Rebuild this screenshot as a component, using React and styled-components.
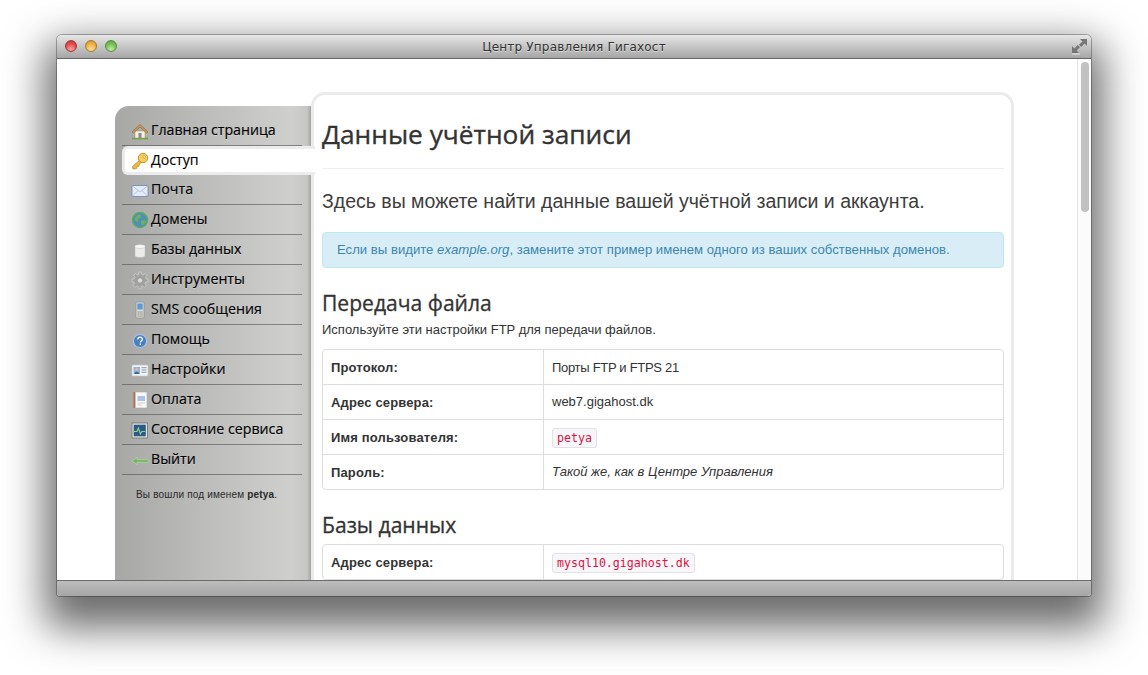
import React from "react";
import styled, { createGlobalStyle } from "styled-components";

const Global = createGlobalStyle`
  html, body {
    margin: 0;
    height: 675px;
    overflow: hidden;
    background: #fff;
  }
  * { box-sizing: border-box; }
`;

const Page = styled.div`
  padding: 35px 57px 0;
`;

const Window = styled.div`
  width: 1034px;
  height: 561px;
  display: flex;
  flex-direction: column;
  border-radius: 5px 5px 3px 3px;
  background: #fff;
  box-shadow: 0 0 0 1px rgba(0, 0, 0, 0.28), 0 20px 40px 12px rgba(0, 0, 0, 0.58);
  overflow: hidden;
`;

const TitleBar = styled.div`
  position: relative;
  flex: none;
  height: 24px;
  display: flex;
  align-items: center;
  justify-content: center;
  background: linear-gradient(#e6e6e6, #c6c6c6 50%, #a6a6a6);
  border-bottom: 1px solid #666;
`;

const Lights = styled.div`
  position: absolute;
  left: 8px;
  top: 5px;
  display: flex;
  gap: 8px;
`;

const Light = styled.span`
  width: 12px;
  height: 12px;
  border-radius: 50%;
  border: 1px solid ${(p) => p.$edge};
  background: radial-gradient(circle at 50% 85%, ${(p) => p.$glow} 0, ${(p) => p.$color} 60%, ${(p) => p.$top} 100%);
`;

const WindowTitle = styled.div`
  font: 12px "DejaVu Sans", sans-serif;
  letter-spacing: 0.2px;
  color: #333;
  text-shadow: 0 1px 0 rgba(255, 255, 255, 0.5);
`;

const ResizeIcon = styled.svg`
  position: absolute;
  right: 3px;
  top: 3px;
`;

const Body = styled.div`
  flex: 1;
  min-height: 0;
  display: flex;
`;

const Viewport = styled.div`
  flex: 1;
  min-width: 0;
  padding: 33px 0 0 58px;
  overflow: hidden;
`;

const Layout = styled.div`
  display: flex;
  align-items: flex-start;
`;

const Sidebar = styled.nav`
  position: relative;
  z-index: 1;
  flex: none;
  width: 196px;
  height: 600px;
  margin-top: 14px;
  padding: 10px 9px 0 7px;
  border-radius: 14px 0 0 0;
  background: linear-gradient(to right, #a7a7a5 0, #bcbcbb 45%, #cfcfcd 90%, #c6c6c4 98%, #a4a4a4 100%);
`;

const Item = styled.a`
  height: 30px;
  display: flex;
  align-items: center;
  gap: 2px;
  padding: 0 0 2px 9px;
  font: 14.2px "Open Sans", sans-serif;
  color: #000;
  -webkit-text-stroke: 0.15px #000;
  text-shadow: 0 1px 0 rgba(255, 255, 255, 0.25);
  border-bottom: 1px solid rgba(70, 70, 70, 0.55);
`;

const ActiveItem = styled(Item)`
  height: 29px;
  margin-right: -13px;
  padding: 0 0 2px 6px;
  background: #fff;
  text-shadow: none;
  border: 3px solid #ececec;
  border-right: none;
  border-radius: 6px 0 0 6px;
`;

const IconBox = styled.svg`
  flex: none;
  width: 18px;
  height: 18px;
  margin-top: 2px;
`;

const Signed = styled.p`
  margin: 12px 0 0 14px;
  font: 10px/16px "Liberation Sans", sans-serif;
  letter-spacing: 0.17px;
  color: #2a2a2a;
`;

const Main = styled.main`
  flex: none;
  width: 703px;
  min-height: 600px;
  padding: 20px 7px 0 8px;
  border: 3px solid #ebebeb;
  border-radius: 14px 14px 0 0;
  background: #fff;
  color: #333;
  font: 13px/18px "Liberation Sans", sans-serif;
`;

const PageHeader = styled.header`
  padding-bottom: 13px;
  border-bottom: 1px solid #eee;
`;

const H1 = styled.h1`
  margin: 0;
  font: 400 26.3px/38px "Open Sans", sans-serif;
  -webkit-text-stroke: 0.35px #333;
  color: #333;
  padding-bottom: 2px;
`;

const Lead = styled.p`
  margin: 17px 0 0;
  font: 19.5px/30px "Liberation Sans", sans-serif;
  color: #3d3d3d;
`;

const Alert = styled.div`
  margin-top: 16px;
  padding: 8px 14px;
  border: 1px solid #bce8f1;
  border-radius: 4px;
  background: #d9edf7;
  color: #3a87ad;
  font-size: 13.15px;
`;

const H2 = styled.h2`
  margin: 20px 0 0;
  font: 400 21.1px/30px "Open Sans", sans-serif;
  -webkit-text-stroke: 0.3px #333;
  color: #333;
`;

const Note = styled.p`
  margin: 3px 0 10px;
`;

const Table = styled.table`
  width: 100%;
  margin-top: ${(p) => p.$top || 0}px;
  border-collapse: separate;
  border-spacing: 0;
  border: 1px solid #ddd;
  border-radius: 4px;
`;

const Th = styled.th`
  width: 220px;
  height: ${(p) => (p.$first ? 34 : 35)}px;
  padding: 2px 8px 0;
  text-align: left;
  font-weight: 700;
  letter-spacing: 0.15px;
  border-top: ${(p) => (p.$first ? "none" : "1px solid #ddd")};
`;

const Td = styled.td`
  height: ${(p) => (p.$first ? 34 : 35)}px;
  padding: ${(p) => (p.$low ? "2px" : "0")} 8px 0;
  letter-spacing: ${(p) => (p.$tight ? "-0.3px" : "0")};
  border-left: 1px solid #ddd;
  border-top: ${(p) => (p.$first ? "none" : "1px solid #ddd")};
`;

const Code = styled.code`
  padding: 2px 4px;
  font: 11.6px "DejaVu Sans Mono", monospace;
  color: #d14;
  background: #f7f7f9;
  border: 1px solid #e1e1e8;
  border-radius: 3px;
`;

const ScrollTrack = styled.div`
  flex: none;
  width: 14px;
  padding: 3px 2px 0 3px;
  background: #fbfbfb;
  border-left: 1px solid #e6e6e6;
`;

const ScrollThumb = styled.div`
  height: 150px;
  border-radius: 4px;
  background: #c1c1c1;
`;

const BottomBar = styled.div`
  flex: none;
  height: 16px;
  border-top: 1px solid #6a6a6a;
  background: linear-gradient(#bdbdbd, #a6a6a6);
`;

const HomeIcon = () => (
  <IconBox viewBox="0 0 18 18">
    <path d="M1 15.5h16v2H1z" fill="#6fa544" />
    <path d="M4 9h10v7H4z" fill="#f4efe2" stroke="#a89a80" strokeWidth=".6" />
    <path d="M7.5 11h3v5h-3z" fill="#8a8a86" />
    <path d="M1 10 9 2.5 17 10l-1.400 1L9 5 2.400 11z" fill="#c99a5e" stroke="#94692f" strokeWidth=".7" />
  </IconBox>
);

const KeyIcon = () => (
  <IconBox viewBox="0 0 18 18">
    <path d="M9 8 1.500 14.500 2 17l3.500-.4.4-2 2-.4.4-2 2.600-2.400z" fill="#efb93c" stroke="#b07d1a" strokeWidth=".7" />
    <circle cx="12" cy="6" r="4.700" fill="#f4cd5e" stroke="#b07d1a" strokeWidth=".8" />
    <circle cx="13.200" cy="4.800" r="1.200" fill="#fff3c4" stroke="#b07d1a" strokeWidth=".5" />
  </IconBox>
);

const MailIcon = () => (
  <IconBox viewBox="0 0 18 18">
    <path d="M1 4.500h16v11H1z" fill="#e4ecf8" stroke="#6b84b5" strokeWidth=".8" />
    <path d="m1 4.500 8 6.500 8-6.500M1 15.500l6-6M17 15.500l-6-6" fill="none" stroke="#a3b8da" strokeWidth=".8" />
  </IconBox>
);

const GlobeIcon = () => (
  <IconBox viewBox="0 0 18 18">
    <circle cx="9" cy="9" r="7.600" fill="#4e8fbe" stroke="#5fae55" strokeWidth="1.300" />
    <path d="M4 6.500 7.500 3.500l3 .6-1.200 3-2 .6-.4 3L4.200 10zM10 10l4-1.500 1 2.500-3.400 3.400L10 13z" fill="#72b05a" />
  </IconBox>
);

const DatabaseIcon = () => (
  <IconBox viewBox="0 0 18 18">
    <path d="M4 5.500v9c0 1.200 2.200 2 5 2s5-.8 5-2v-9z" fill="#ececea" stroke="#b9b9b6" strokeWidth=".5" />
    <ellipse cx="9" cy="5.500" rx="5" ry="1.900" fill="#fafafa" stroke="#b9b9b6" strokeWidth=".5" />
  </IconBox>
);

const GearIcon = () => (
  <IconBox viewBox="0 0 18 18">
    <path
      d="M7.700 1h2.600l.4 2.300 1.400.6 2-1.300 1.800 1.800-1.300 2 .6 1.400L17 8.200v2.600l-2.300.4-.6 1.400 1.300 2-1.800 1.800-2-1.300-1.400.6-.4 2.200H7.700l-.4-2.200-1.400-.6-2 1.300-1.800-1.800 1.300-2-.6-1.400L1 10.800V8.200l2.300-.4.6-1.400-1.300-2 1.800-1.800 2 1.300 1.400-.6z"
      fill="#a2a2a0"
      stroke="#dcdcda"
      strokeWidth=".6"
    />
    <circle cx="9" cy="9.500" r="2.700" fill="#dcdcda" stroke="#808080" strokeWidth=".6" />
  </IconBox>
);

const PhoneIcon = () => (
  <IconBox viewBox="0 0 18 18">
    <rect x="5" y="1" width="8" height="16" rx="1" fill="#dcdcd8" stroke="#8c8c88" strokeWidth=".7" />
    <path d="M6.300 2.500h5.400v6H6.300z" fill="#5d9bd8" />
    <path d="M6.500 10.500h1.300v1H6.500zM8.400 10.500h1.300v1H8.400zM10.300 10.500h1.300v1h-1.300zM6.500 12.500h1.300v1H6.500zM8.400 12.500h1.300v1H8.400zM10.300 12.500h1.300v1h-1.300zM6.500 14.500h1.300v1H6.500zM8.400 14.500h1.300v1H8.400zM10.300 14.500h1.300v1h-1.300z" fill="#7d7d7a" />
  </IconBox>
);

const HelpIcon = () => (
  <IconBox viewBox="0 0 18 18">
    <circle cx="9" cy="10" r="6.600" fill="#4a7fc4" stroke="#a9c3e6" strokeWidth="1.200" />
    <path d="M6.800 8.500c0-3 4.600-3 4.600-.2 0 1.700-2.100 1.700-2.100 3.200" fill="none" stroke="#fff" strokeWidth="1.300" />
    <path d="M8.600 12.500h1.400v1.400H8.600z" fill="#fff" />
  </IconBox>
);

const CardIcon = () => (
  <IconBox viewBox="0 0 18 18">
    <rect x="1" y="4" width="16" height="11" rx="1" fill="#f3f3f3" stroke="#c4c4c4" strokeWidth=".6" />
    <path d="M2.500 6h6.500v7H2.500z" fill="#8db4e2" />
    <circle cx="5.700" cy="8.300" r="1.500" fill="#e7b98d" />
    <path d="M3.400 13c0-3 4.700-3 4.700 0z" fill="#3a64a8" />
    <path d="M10.500 6.700h5M10.500 9h5M10.500 11.300h5" stroke="#7d8aa0" strokeWidth=".9" />
  </IconBox>
);

const NotebookIcon = () => (
  <IconBox viewBox="0 0 18 18">
    <path d="M2.500 1h1.800v16H2.500z" fill="#b8683a" />
    <path d="M4.300 1H16v16H4.300z" fill="#f8f8f8" stroke="#a9a9a9" strokeWidth=".6" />
    <path d="M6.500 5h7.500v5H6.500z" fill="#a9c3ea" />
    <path d="M6.500 12h7.500M6.500 14h4" stroke="#c4c4c4" strokeWidth=".8" />
  </IconBox>
);

const StatusIcon = () => (
  <IconBox viewBox="0 0 18 18">
    <rect x="1" y="2" width="15.500" height="15" fill="#e4e4e2" stroke="#6e6e6e" strokeWidth=".8" />
    <path d="M2.700 3.700h12.100v11.600H2.700z" fill="#2a5a88" />
    <path d="M3 10.500h3l1.400-3.500 2 6 1.400-2.500h3.500" fill="none" stroke="#8fd48a" strokeWidth="1.100" />
  </IconBox>
);

const LogoutIcon = () => (
  <IconBox viewBox="0 0 18 18">
    <path d="M1 10 6 6.500v2.200h10.500a1.300 1.300 0 0 1 0 2.600H6v2.200z" fill="#74b85e" stroke="#c4e0b4" strokeWidth=".5" />
  </IconBox>
);

const nav = [
  { label: "Главная страница", Icon: HomeIcon },
  { label: "Доступ", Icon: KeyIcon, active: true },
  { label: "Почта", Icon: MailIcon },
  { label: "Домены", Icon: GlobeIcon },
  { label: "Базы данных", Icon: DatabaseIcon },
  { label: "Инструменты", Icon: GearIcon },
  { label: "SMS сообщения", Icon: PhoneIcon },
  { label: "Помощь", Icon: HelpIcon },
  { label: "Настройки", Icon: CardIcon },
  { label: "Оплата", Icon: NotebookIcon },
  { label: "Состояние сервиса", Icon: StatusIcon },
  { label: "Выйти", Icon: LogoutIcon },
];

const App = () => (
  <Page>
    <Global />
    <Window>
      <TitleBar>
        <Lights>
          <Light $color="#e2484a" $top="#c0363a" $glow="#f7a8a4" $edge="#9c3a3a" />
          <Light $color="#eeae3e" $top="#cf9028" $glow="#fbe29a" $edge="#a07a30" />
          <Light $color="#74bf52" $top="#58a23c" $glow="#c2eaa4" $edge="#5d8a48" />
        </Lights>
        <WindowTitle>Центр Управления Гигахост</WindowTitle>
        <ResizeIcon width="17" height="17" viewBox="0 0 17 17">
          <path d="M16 1h-7l2.400 2.400-3.400 3.300 2.300 2.300 3.300-3.400L16 8z" fill="#777" />
          <path d="M1 15V8l2.400 2.400 3.300-3.400L9 9.300l-3.400 3.300L8 15z" fill="#777" />
          <path d="M1 16h8" stroke="#e8e8e8" strokeWidth="1" />
        </ResizeIcon>
      </TitleBar>
      <Body>
        <Viewport>
          <Layout>
            <Sidebar>
              {nav.map(({ label, Icon, active }) => {
                const Row = active ? ActiveItem : Item;
                return (
                  <Row key={label}>
                    <Icon />
                    {label}
                  </Row>
                );
              })}
              <Signed>
                Вы вошли под именем <b>petya</b>.
              </Signed>
            </Sidebar>
            <Main>
              <PageHeader>
                <H1>Данные учётной записи</H1>
              </PageHeader>
              <Lead>Здесь вы можете найти данные вашей учётной записи и аккаунта.</Lead>
              <Alert>
                Если вы видите <em>example.org</em>, замените этот пример именем одного из ваших собственных доменов.
              </Alert>
              <H2>Передача файла</H2>
              <Note>Используйте эти настройки FTP для передачи файлов.</Note>
              <Table>
                <tbody>
                  <tr>
                    <Th $first>Протокол:</Th>
                    <Td $first $tight $low>
                      Порты FTP и FTPS 21
                    </Td>
                  </tr>
                  <tr>
                    <Th>Адрес сервера:</Th>
                    <Td>web7.gigahost.dk</Td>
                  </tr>
                  <tr>
                    <Th>Имя пользователя:</Th>
                    <Td $low>
                      <Code>petya</Code>
                    </Td>
                  </tr>
                  <tr>
                    <Th>Пароль:</Th>
                    <Td>
                      <em>Такой же, как в Центре Управления</em>
                    </Td>
                  </tr>
                </tbody>
              </Table>
              <H2>Базы данных</H2>
              <Table $top={4}>
                <tbody>
                  <tr>
                    <Th $first>Адрес сервера:</Th>
                    <Td $first $low>
                      <Code>mysql10.gigahost.dk</Code>
                    </Td>
                  </tr>
                </tbody>
              </Table>
            </Main>
          </Layout>
        </Viewport>
        <ScrollTrack>
          <ScrollThumb />
        </ScrollTrack>
      </Body>
      <BottomBar />
    </Window>
  </Page>
);

export default App;
